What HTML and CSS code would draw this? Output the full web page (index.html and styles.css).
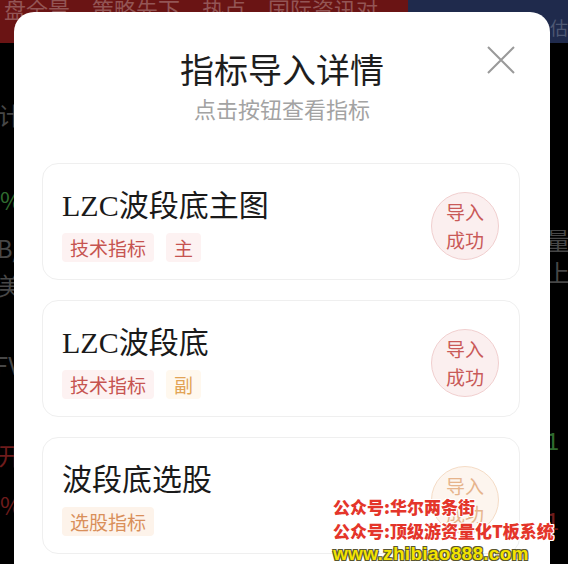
FILE: index.html
```html
<!DOCTYPE html>
<html>
  <head>
    <meta charset="utf-8">
    <meta name="viewport" content="width=device-width, initial-scale=1">
    <title>指标导入详情</title>
    <link rel="stylesheet" href="styles.css">
  </head>
  <body>
    <div class="screen">
      <header class="topbar">
        <div class="topbar-red">盘全景　策略先下　热点　国际资讯对</div>
        <div class="topbar-blue">计估</div>
      </header>

      <!-- the quote page behind the dialog, mostly hidden -->
      <div class="backdrop">
        <div class="side side-left">
          <span class="dim l1">会计</span>
          <span class="up l2">%</span>
          <span class="dim l3">B/</span>
          <span class="dim l4">美</span>
          <span class="dim l5">FV</span>
          <span class="down l6">开</span>
          <span class="down l7">%</span>
        </div>
        <div class="side side-right">
          <span class="dim r1">量,</span>
          <span class="dim r2">上</span>
          <span class="up r3">1</span>
          <span class="down r4">1</span>
        </div>
      </div>

      <section class="modal">
        <div class="modal-head">
          <h1>指标导入详情</h1>
          <p class="hint">点击按钮查看指标</p>
          <button class="close" aria-label="关闭">
            <svg width="30" height="30" viewBox="0 0 30 30">
              <path d="M2 2 L28 28 M28 2 L2 28" stroke="#9a9a9a" stroke-width="2" fill="none"/>
            </svg>
          </button>
        </div>

        <ul class="list">
          <li class="card">
            <div class="info">
              <h2>LZC波段底主图</h2>
              <div class="tags">
                <span class="tag tag-red">技术指标</span>
                <span class="tag tag-red">主</span>
              </div>
            </div>
            <div class="badge">导入<br>成功</div>
          </li>
          <li class="card">
            <div class="info">
              <h2>LZC波段底</h2>
              <div class="tags">
                <span class="tag tag-red">技术指标</span>
                <span class="tag tag-gold">副</span>
              </div>
            </div>
            <div class="badge">导入<br>成功</div>
          </li>
          <li class="card">
            <div class="info">
              <h2>波段底选股</h2>
              <div class="tags">
                <span class="tag tag-orange">选股指标</span>
              </div>
            </div>
            <div class="badge badge-orange">导入<br>成功</div>
          </li>
        </ul>
      </section>

      <div class="watermark">
        <div class="wm-red">公众号:华尔两条街</div>
        <div class="wm-red">公众号:顶级游资量化T板系统</div>
        <div class="wm-yellow">www.zhibiao888.com</div>
      </div>
    </div>
  </body>
</html>
```

FILE: styles.css
```css
html,
body {
  margin: 0;
  height: 100%;
}

body {
  background: #000;
  font-family: "Noto Sans CJK SC", "Noto Sans", sans-serif;
  overflow: hidden;
}

.screen {
  position: relative;
  height: 564px;
  overflow: hidden;
}

.topbar {
  display: flex;
  height: 43px;
  font-size: 22px;
  line-height: 16px;
  white-space: nowrap;
  overflow: hidden;
}

.topbar-red {
  width: 430px;
  background: #6a1414;
  color: #935555;
  padding: 0 0 0 4px;
}

.topbar-blue {
  flex: 1;
  background: #1f2a4c;
  color: #4e5873;
  font-size: 18px;
  line-height: 22px;
  padding: 16px 0 0 124px;
}

.backdrop {
  display: flex;
  justify-content: space-between;
  font-size: 24px;
  line-height: 30px;
}

.side {
  display: flex;
  flex-direction: column;
  width: 22px;
  white-space: nowrap;
}

.side-left {
  align-items: flex-end;
}

.side-right {
  align-items: flex-start;
}

.dim { color: #474747; }
.up { color: #2f6b2f; }
.down { color: #6e1c1c; }

.l1 { margin-top: 57px; }
.l2 { margin-top: 55px; }
.l3 { margin-top: 18px; }
.l4 { margin-top: 7px; }
.l5 { margin-top: 50px; }
.l6 { margin-top: 60px; }
.l7 { margin-top: 20px; }

.r1 { margin-top: 182px; }
.r2 { margin-top: 2px; }
.r3 { margin-top: 138px; }
.r4 { margin-top: 50px; }

.modal {
  position: absolute;
  left: 14px;
  top: 12px;
  width: 536px;
  bottom: -20px;
  background: #fff;
  border-radius: 20px 20px 0 0;
}

.modal-head {
  position: relative;
  padding-top: 35px;
  text-align: center;
}

.modal-head h1 {
  margin: 0;
  font-size: 34px;
  line-height: 44px;
  font-weight: 400;
  color: #1e1e1e;
}

.hint {
  margin: 2px 0 0;
  font-size: 22px;
  line-height: 30px;
  color: #a3a3a3;
}

.close {
  position: absolute;
  top: 33px;
  right: 34px;
  padding: 0;
  border: 0;
  background: none;
  width: 30px;
  height: 30px;
}

.close svg {
  display: block;
}

.list {
  list-style: none;
  margin: 40px 30px 0 28px;
  padding: 0;
  display: flex;
  flex-direction: column;
  gap: 20px;
}

.card {
  box-sizing: border-box;
  height: 117px;
  border: 1px solid #efefef;
  border-radius: 16px;
  padding: 22px 20px 0 19px;
  display: flex;
  justify-content: space-between;
  align-items: flex-start;
}

.info h2 {
  margin: 0;
  font-family: "Liberation Serif", "Noto Sans CJK SC", serif;
  font-size: 30px;
  line-height: 40px;
  font-weight: 400;
  color: #1a1a1a;
}

.tags {
  display: flex;
  gap: 12px;
  margin-top: 7px;
}

.tag {
  padding: 0 8px;
  height: 29px;
  font-size: 19px;
  line-height: 29px;
  border-radius: 4px;
}

.tag-red {
  color: #c65450;
  background: #fdf2f2;
}

.tag-gold {
  color: #e2a355;
  background: #fff8ee;
}

.tag-orange {
  color: #d98f5a;
  background: #fdf3ea;
}

.badge {
  box-sizing: border-box;
  width: 68px;
  height: 68px;
  margin-top: 6px;
  border-radius: 50%;
  border: 1px solid #f1cfcf;
  background: #fbefef;
  color: #c95a58;
  font-size: 19px;
  line-height: 28px;
  text-align: center;
  padding-top: 5px;
}

.badge-orange {
  border-color: #f5dcc6;
  background: #fdf5ee;
  color: #e6b48c;
}

.watermark {
  position: absolute;
  left: 333px;
  top: 495px;
  font-weight: 900;
  white-space: nowrap;
}

.wm-red {
  font-size: 17px;
  line-height: 24px;
  color: #e4352a;
  text-shadow: 1px 1px 0 #fff, -1px -1px 0 #fff, 1px -1px 0 #fff, -1px 1px 0 #fff,
    0 1px 0 #fff, 0 -1px 0 #fff, 1px 0 0 #fff, -1px 0 0 #fff;
}

.wm-yellow {
  font-family: "Liberation Sans", sans-serif;
  font-size: 19px;
  line-height: 22px;
  color: #f3e400;
  letter-spacing: 0.3px;
  text-shadow: 1px 1px 0 #5a5630, -1px -1px 0 #5a5630, 1px -1px 0 #5a5630, -1px 1px 0 #5a5630;
}
```
